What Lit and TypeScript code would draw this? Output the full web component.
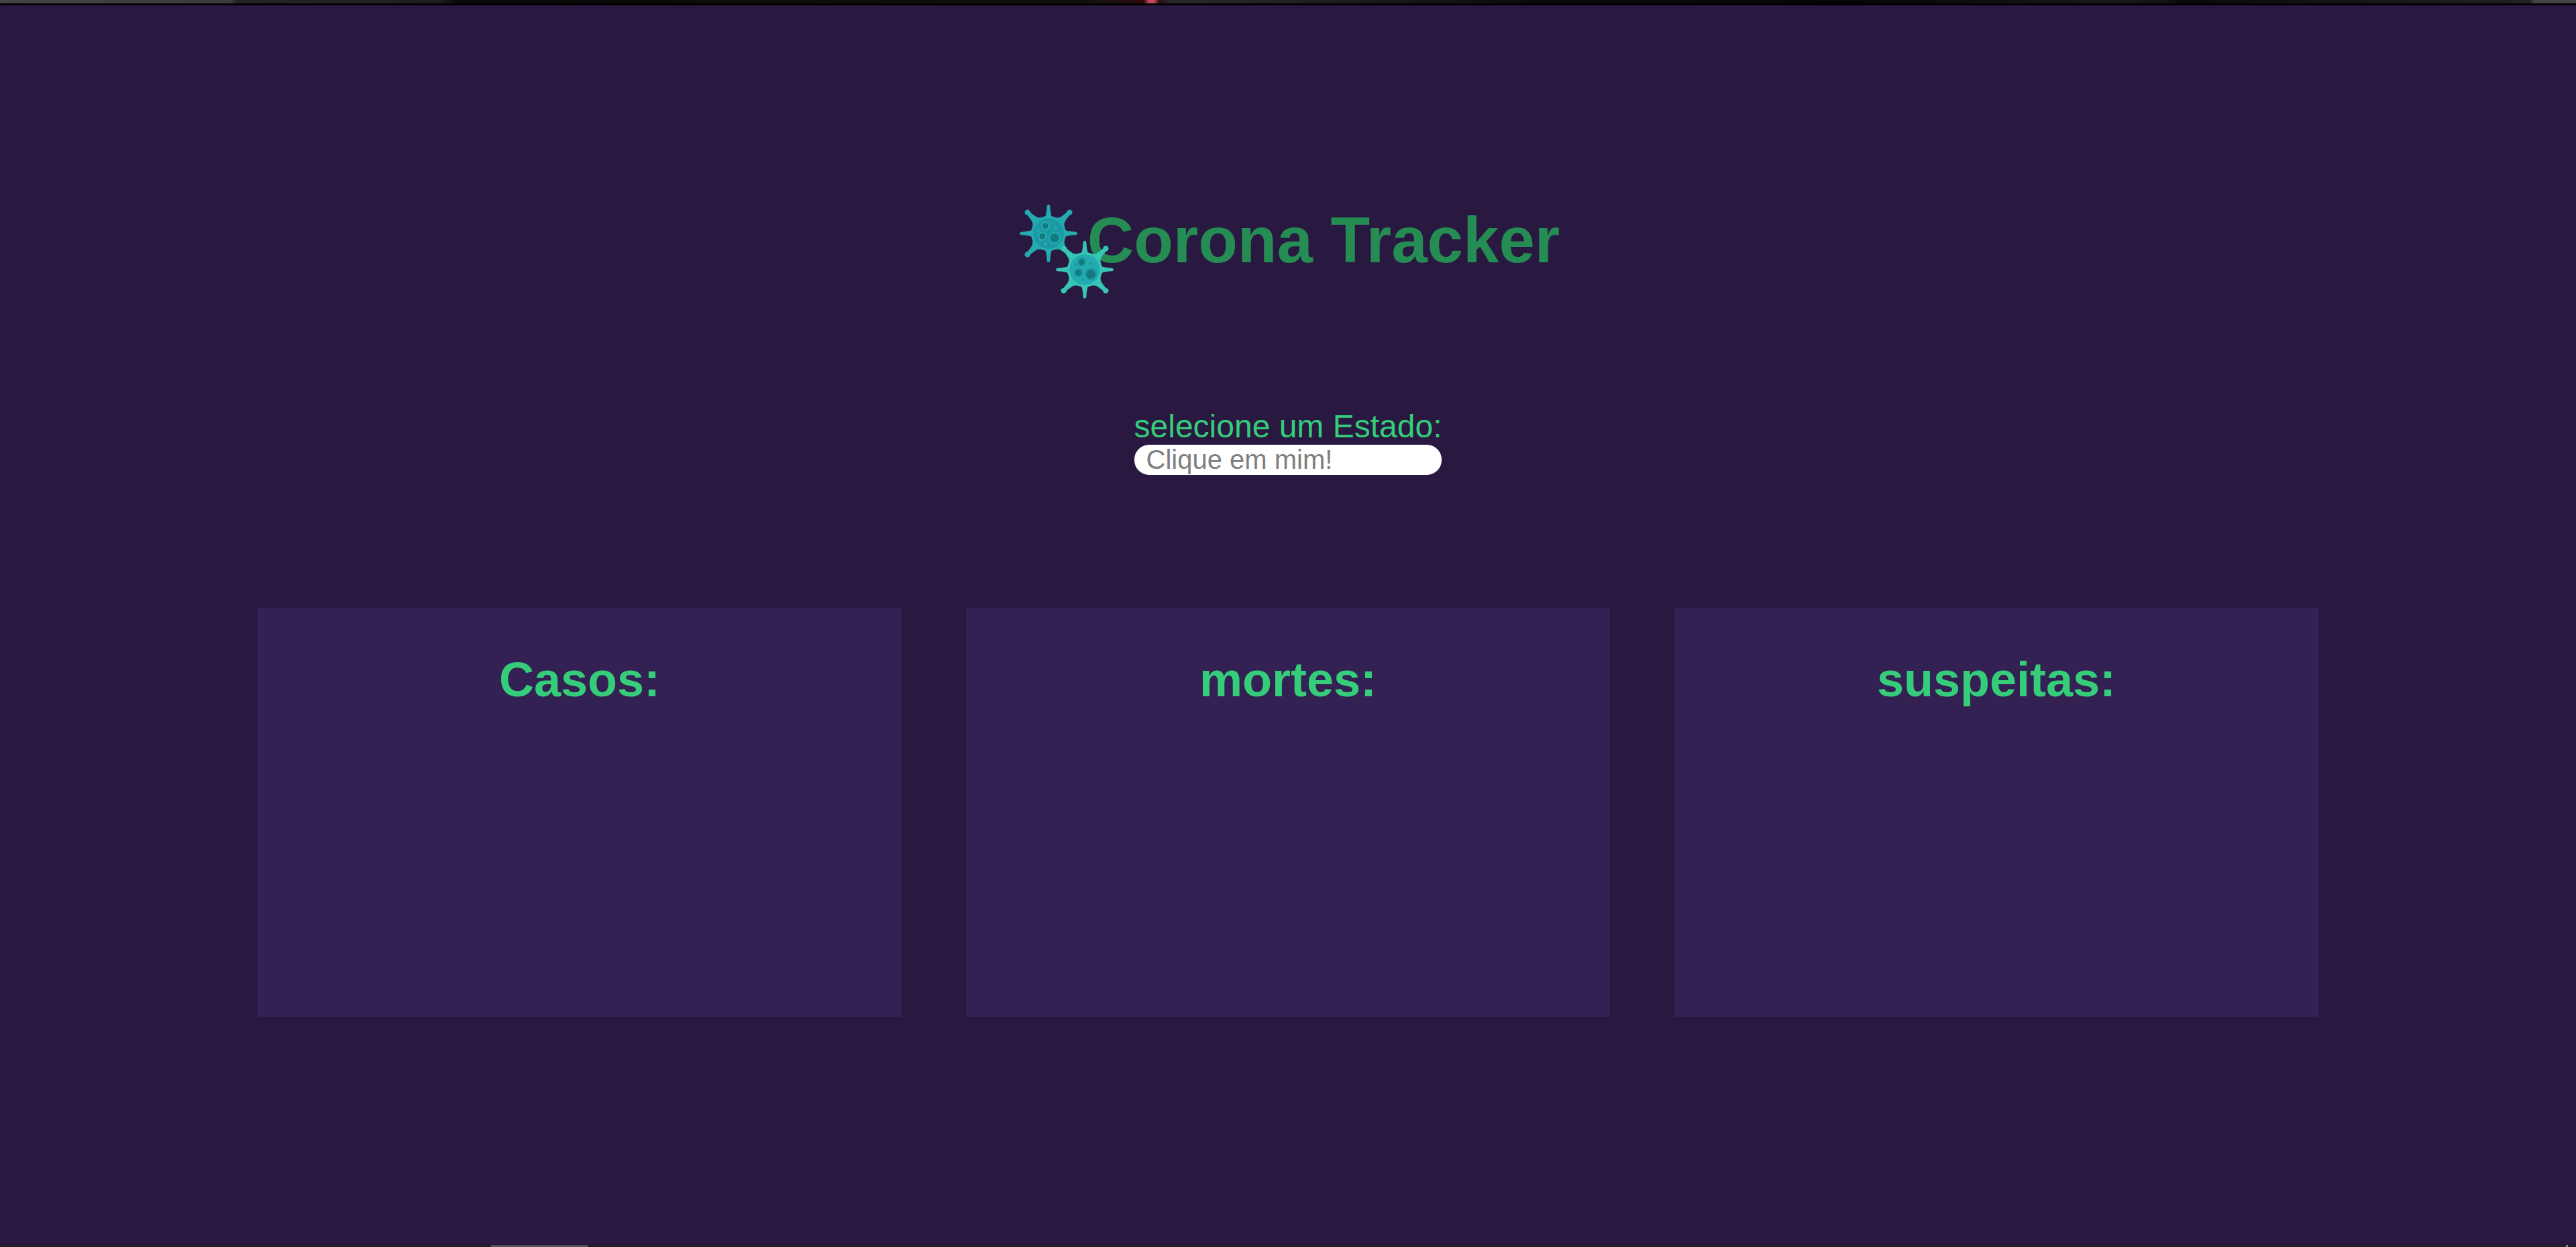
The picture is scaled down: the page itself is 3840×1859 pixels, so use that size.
import { LitElement, html, css, svg } from "lit";
import { customElement, property } from "lit/decorators.js";

interface Pore {
  x: number;
  y: number;
  r: number;
}

interface Virus {
  x: number;
  y: number;
  shell: string;
  core: string;
  ring: string;
  dot: string;
  dots: Pore[];
}

const PORES: Pore[] = [
  { x: -14, y: -34, r: 13 },
  { x: 27, y: 20, r: 20 },
  { x: -28, y: 13, r: 13 },
];

const VIRUSES: Virus[] = [
  {
    x: 186,
    y: 204,
    shell: "#24abb0",
    core: "#1b99a4",
    ring: "#24abb0",
    dot: "#24abb0",
    dots: [
      { x: -47, y: -14, r: 7 },
      { x: 34, y: -27, r: 7 },
      { x: -14, y: 47, r: 7 },
    ],
  },
  {
    x: 348,
    y: 366,
    shell: "#36c6b3",
    core: "#24abb0",
    ring: "#1b99a4",
    dot: "#1b99a4",
    dots: [
      { x: -41, y: -20, r: 7 },
      { x: 27, y: -27, r: 7 },
      { x: -7, y: 46, r: 7 },
    ],
  },
];

@customElement("virus-logo")
class VirusLogo extends LitElement {
  static styles = css`
    :host {
      display: block;
    }
    .logo {
      display: block;
      width: 100%;
    }
  `;

  private drawVirus(v: Virus) {
    const straight = [0, 90, 180, 270];
    const diagonal = [45, 135, 225, 315];
    return svg`
      <g transform="translate(${v.x} ${v.y})">
        <g fill=${v.shell}>
          ${straight.map(
            (a) => svg`<path transform="rotate(${a})"
              d="M-24 -70 Q-14 -74 -12 -82 Q-8 -100 -7 -122 Q-6 -129 0 -129 Q6 -129 7 -122 Q8 -100 12 -82 Q14 -74 24 -70Z" />`
          )}
          ${diagonal.map(
            (a) => svg`<g transform="rotate(${a})">
              <path d="M-32 -70 Q-19 -77 -15 -88 Q-10 -104 -9 -130 L9 -130 Q10 -104 15 -88 Q19 -77 32 -70Z" />
              <circle cy="-133" r="12.5" />
            </g>`
          )}
          <circle r="78" />
        </g>
        <circle r="68" fill=${v.core} />
        ${PORES.map(
          (p) => svg`<circle cx=${p.x} cy=${p.y} r=${p.r + 7} fill=${v.ring} />
            <circle cx=${p.x} cy=${p.y} r=${p.r} fill="#137a80" />`
        )}
        ${v.dots.map(
          (p) => svg`<circle cx=${p.x} cy=${p.y} r=${p.r} fill=${v.dot} />`
        )}
      </g>`;
  }

  render() {
    return html`<svg class="logo" viewBox="42 69 444 435" aria-hidden="true">
      ${VIRUSES.map((v) => this.drawVirus(v))}
    </svg>`;
  }
}

@customElement("stat-card")
class StatCard extends LitElement {
  static styles = css`
    :host {
      display: block;
      box-sizing: border-box;
      min-height: 610px;
      padding: 66px 24px;
      background: #332153;
      color: #35cd7a;
      text-align: center;
    }
    .heading {
      margin: 0;
      font-size: 72px;
      line-height: 82px;
      font-weight: 700;
    }
  `;

  @property() heading = "";

  render() {
    return html`<h2 class="heading">${this.heading}</h2>`;
  }
}

@customElement("app-root")
class AppRoot extends LitElement {
  static styles = css`
    :host {
      display: flex;
      flex-direction: column;
      min-height: 100vh;
      background: #291941;
      font-family: "Liberation Sans", Arial, sans-serif;
    }
    .top-edge {
      height: 5px;
      border-bottom: 3px solid #000;
      background: linear-gradient(
        90deg,
        #444 0%,
        #3b3b3b 9%,
        #242424 9.2%,
        #202020 17%,
        #090909 17.8%,
        #11110f 42%,
        #201312 43.5%,
        #300508 44.4%,
        #c24a5a 44.6%,
        #c24a5a 44.8%,
        #300d10 45%,
        #282828 45.4%,
        #222 50%,
        #0a0a0a 60%,
        #060606 72%,
        #191919 82%,
        #141414 84%,
        #0a0a0a 84.7%,
        #222 98.2%,
        #444 98.4%
      );
    }
    .page {
      flex: 1;
      display: flex;
      flex-direction: column;
      align-items: center;
      padding: 295px 10% 80px;
    }
    .brand {
      display: flex;
      align-items: flex-start;
    }
    .brand-logo {
      flex: none;
      width: 148px;
      margin-right: -42px;
      z-index: 1;
    }
    .title {
      margin: 0;
      font-size: 96px;
      line-height: 110px;
      font-weight: 700;
      color: #258d53;
    }
    .picker {
      display: flex;
      flex-direction: column;
      margin-top: 160px;
    }
    .picker-label {
      font-size: 48px;
      line-height: 55px;
      color: #35cd7a;
    }
    .picker-input {
      box-sizing: border-box;
      width: 100%;
      min-width: 0;
      height: 45px;
      padding: 0 18px;
      border: 0;
      border-radius: 22px;
      background: #fff;
      color: #222;
      font: 40px / 45px "Liberation Sans", Arial, sans-serif;
    }
    .picker-input::placeholder {
      color: #808080;
      opacity: 1;
    }
    .cards {
      align-self: stretch;
      display: grid;
      grid-template-columns: repeat(3, 1fr);
      gap: 96px;
      margin-top: 198px;
    }
    .bottom-edge {
      display: flex;
      justify-content: space-between;
      height: 3px;
      padding: 0 12px 0 732px;
      background: #222024;
    }
    .thumb {
      width: 144px;
      background: #545154;
    }
    .notch {
      width: 3px;
      background: #8a878a;
    }
  `;

  render() {
    return html`
      <div class="top-edge"></div>
      <main class="page">
        <header class="brand">
          <virus-logo class="brand-logo"></virus-logo>
          <h1 class="title">Corona Tracker</h1>
        </header>
        <form class="picker">
          <label class="picker-label" for="estado">selecione um Estado:</label>
          <input
            class="picker-input"
            id="estado"
            type="text"
            size="1"
            placeholder="Clique em mim!"
          />
        </form>
        <section class="cards">
          ${["Casos:", "mortes:", "suspeitas:"].map(
            (h) => html`<stat-card heading=${h}></stat-card>`
          )}
        </section>
      </main>
      <div class="bottom-edge">
        <div class="thumb"></div>
        <div class="notch"></div>
      </div>
    `;
  }
}
